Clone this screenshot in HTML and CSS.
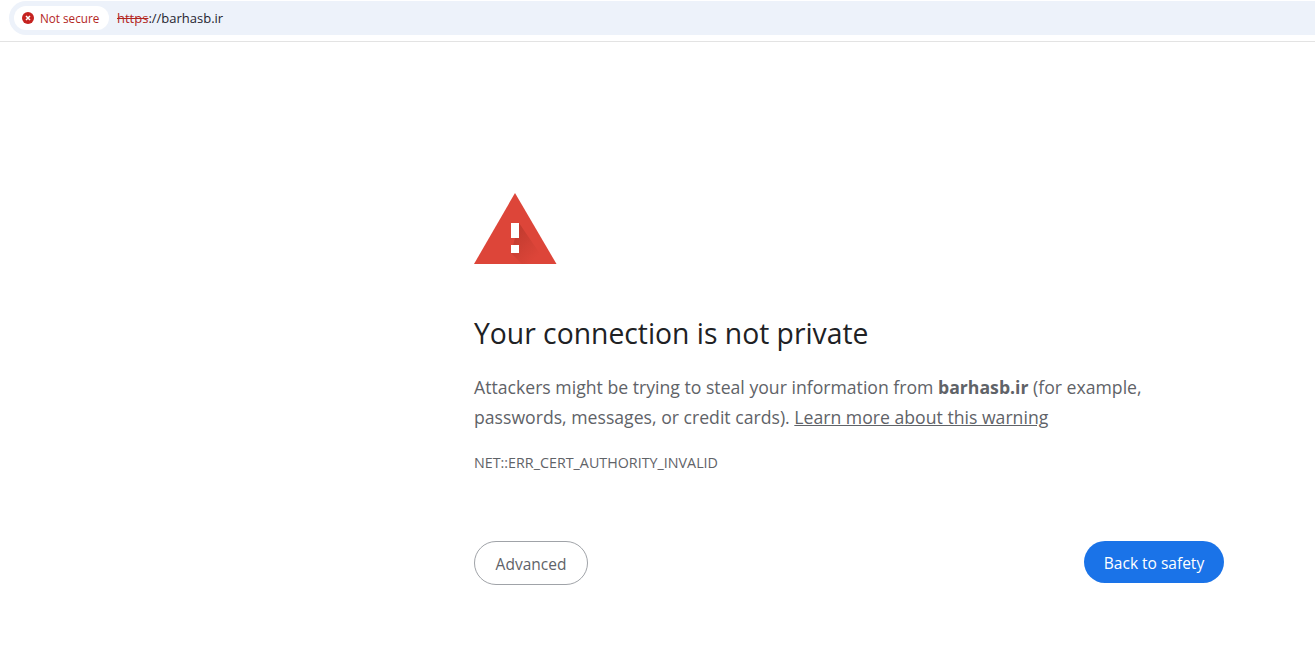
FILE: index.html
```html
<!DOCTYPE html>
<html lang="en">
<head>
    <meta charset="UTF-8">
    <meta name="viewport" content="width=device-width, initial-scale=1.0">
    <title>Privacy error</title>
    <link rel="stylesheet" href="styles.css">
</head>
<body>
    <div class="toolbar">
        <div class="omnibox">
            <div class="chip">
                <svg class="chip-icon" width="12" height="12" viewBox="0 0 12 12">
                    <circle cx="6" cy="6" r="6" fill="#c5221f"/>
                    <path d="M4 4l4 4M8 4l-4 4" stroke="#fff" stroke-width="1.5" fill="none"/>
                </svg>
                <span>Not secure</span>
            </div>
            <div class="url"><span class="scheme">https</span>://barhasb.ir</div>
        </div>
    </div>

    <div class="main">
        <svg class="warning" width="83" height="71" viewBox="0 0 83 71">
            <defs>
                <linearGradient id="shade" x1="0.1" y1="0.1" x2="0.75" y2="0.8">
                    <stop offset="0" stop-color="#bf3a2e"/>
                    <stop offset="1" stop-color="#dd4539"/>
                </linearGradient>
            </defs>
            <path d="M41 0L82.500 71H0z" fill="#dd4539"/>
            <path d="M45 30L73 71H48L37 60z" fill="url(#shade)"/>
            <path d="M37 30h8v15h-8zM37 52h8v8h-8z" fill="#fff"/>
        </svg>
        <h1>Your connection is not private</h1>
        <p class="message">Attackers might be trying to steal your information from <b>barhasb.ir</b> (for example, passwords, messages, or credit cards). <a href="#">Learn more about this warning</a></p>
        <div class="code">NET::ERR_CERT_AUTHORITY_INVALID</div>
        <div class="buttons">
            <button class="btn-advanced">Advanced</button>
            <button class="btn-back">Back to safety</button>
        </div>
    </div>
</body>
</html>
```

FILE: styles.css
```css
body {
    margin: 0;
    background: #fff;
    font-family: "Open Sans", "Noto Sans", Arial, sans-serif;
    color: #5f6368;
}
.toolbar {
    height: 42px;
    padding: 1px 0 0 9px;
    box-sizing: border-box;
    border-bottom: 1px solid #e3e3e3;
}
.omnibox {
    display: flex;
    align-items: center;
    height: 34px;
    padding-left: 5px;
    background: #edf2fa;
    border-radius: 17px 0 0 17px;
}
.chip {
    display: flex;
    align-items: center;
    gap: 6px;
    width: 95px;
    height: 24px;
    padding: 0 0 1px 8px;
    box-sizing: border-box;
    background: #fff;
    border-radius: 12px;
    color: #b3261e;
    font-size: 11.7px;
    white-space: nowrap;
}
.url {
    margin-left: 8px;
    font-size: 13px;
    color: #1f2430;
}
.scheme {
    color: #b3261e;
    text-decoration: line-through;
}
.main {
    display: flex;
    flex-direction: column;
    align-items: flex-start;
    width: 750px;
    margin-left: 474px;
    padding-top: 151px;
}
.warning {
    display: block;
}
h1 {
    margin: 49px 0 0;
    font-size: 28.3px;
    font-weight: 400;
    line-height: 40px;
    color: #202124;
}
.message {
    margin: 19px 0 0;
    font-size: 17.65px;
    line-height: 30px;
}
.message a {
    color: #5f6368;
}
.code {
    margin-top: 21px;
    font-size: 14.3px;
    line-height: 20px;
}
.buttons {
    display: flex;
    justify-content: space-between;
    align-items: flex-start;
    width: 100%;
    margin-top: 68px;
}
button {
    font-family: inherit;
    font-size: 15.5px;
    border-radius: 22px;
    cursor: pointer;
}
.btn-advanced {
    width: 114px;
    height: 44px;
    padding-top: 3px;
    background: #fff;
    border: 1px solid #a0a3a8;
    color: #5f6368;
}
.btn-back {
    width: 140px;
    height: 42px;
    padding-top: 2px;
    background: #1a73e8;
    border: none;
    color: #fff;
}
```
